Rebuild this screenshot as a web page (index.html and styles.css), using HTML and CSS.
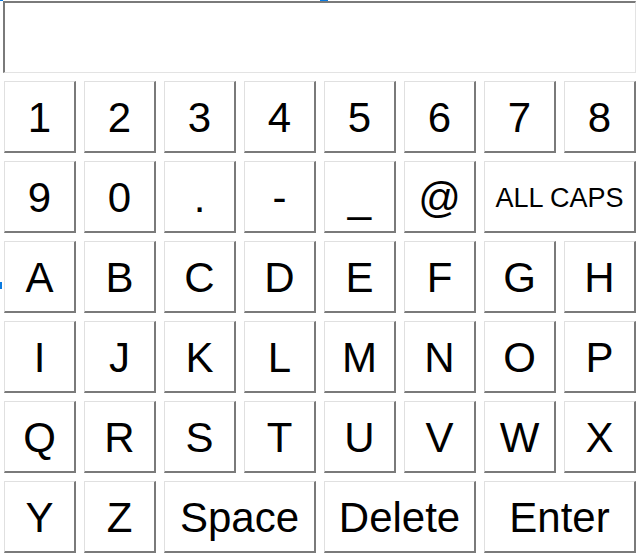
FILE: index.html
```html
<!DOCTYPE html>
<html>
<head>
<meta charset="utf-8">
<link rel="stylesheet" href="styles.css">
</head>
<body>
<span class="mark mark-tl"></span>
<span class="mark mark-top"></span>
<span class="mark mark-left"></span>
<div class="display"></div>
<div class="keyboard">
  <button class="key">1</button><button class="key">2</button><button class="key">3</button><button class="key">4</button><button class="key">5</button><button class="key">6</button><button class="key">7</button><button class="key">8</button>
  <button class="key">9</button><button class="key">0</button><button class="key">.</button><button class="key">-</button><button class="key">_</button><button class="key">@</button><button class="key wide small">ALL CAPS</button>
  <button class="key">A</button><button class="key">B</button><button class="key">C</button><button class="key">D</button><button class="key">E</button><button class="key">F</button><button class="key">G</button><button class="key">H</button>
  <button class="key">I</button><button class="key">J</button><button class="key">K</button><button class="key">L</button><button class="key">M</button><button class="key">N</button><button class="key">O</button><button class="key">P</button>
  <button class="key">Q</button><button class="key">R</button><button class="key">S</button><button class="key">T</button><button class="key">U</button><button class="key">V</button><button class="key">W</button><button class="key">X</button>
  <button class="key">Y</button><button class="key">Z</button><button class="key wide">Space</button><button class="key wide">Delete</button><button class="key wide">Enter</button>
</div>
</body>
</html>
```
FILE: styles.css
```css
html, body {
  margin: 0;
  padding: 0;
  background: #fff;
}
body {
  position: relative;
  width: 637px;
  height: 558px;
  overflow: hidden;
  font-family: "Liberation Sans", Arial, sans-serif;
}
.display {
  box-sizing: border-box;
  margin: 1px 0 0 3px;
  width: 633px;
  height: 72px;
  border-style: solid;
  border-width: 2px 1px 1px 2px;
  border-color: #7a7a7a #e3e3e3 #e3e3e3 #7a7a7a;
  background: #fff;
}
.keyboard {
  display: grid;
  grid-template-columns: repeat(8, 72px);
  grid-auto-rows: 72px;
  column-gap: 8px;
  row-gap: 8px;
  padding: 8px 0 0 4px;
}
.key {
  box-sizing: border-box;
  margin: 0;
  padding: 2px 0 0 0;
  border-style: solid;
  border-width: 1px 2px 2px 1px;
  border-color: #e0e0e0 #7a7a7a #7a7a7a #e0e0e0;
  background: #fff;
  color: #000;
  font-family: "Liberation Sans", Arial, sans-serif;
  font-size: 42px;
  line-height: 1;
  display: flex;
  align-items: center;
  justify-content: center;
}
.wide {
  grid-column: span 2;
}
.small {
  font-size: 27px;
  padding-top: 3px;
}
.mark {
  position: absolute;
  background: #0a7ae0;
}
.mark-tl {
  left: 0;
  top: 0;
  width: 3px;
  height: 1px;
}
.mark-top {
  left: 320px;
  top: 0;
  width: 8px;
  height: 1px;
}
.mark-left {
  left: 0;
  top: 282px;
  width: 2px;
  height: 7px;
}
```
